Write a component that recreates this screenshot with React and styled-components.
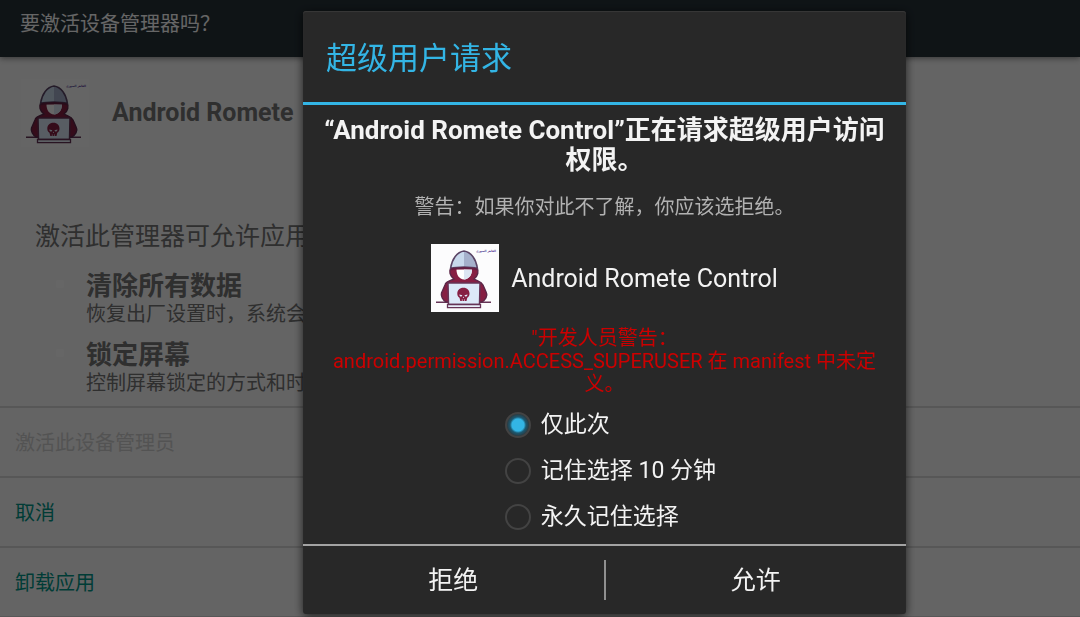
import React, { useState } from "react";
import styled, { createGlobalStyle } from "styled-components";

const GlobalStyle = createGlobalStyle`
  * { box-sizing: border-box; }
  body {
    margin: 0;
    background: #fafafa;
    font-family: Roboto, "Noto Sans CJK SC", sans-serif;
  }
  h1, h2, h3, p, ul, fieldset { margin: 0; padding: 0; border: 0; }
  button { font-family: inherit; background: none; border: 0; cursor: pointer; }
`;

const Page = styled.div`
  display: flex;
  flex-direction: column;
  height: 100vh;
  overflow: hidden;
  white-space: nowrap;
  color: #757575;
`;

const AppBar = styled.header`
  flex: none;
  height: 57px;
  padding: 12px 20px;
  background: #263238;
  color: #ffffff;
  box-shadow: 0 1px 6px rgba(0, 0, 0, 0.5);
`;

const AppBarTitle = styled.h1`
  font-size: 20px;
  line-height: 24px;
  font-weight: 400;
`;

const AdminInfo = styled.main`
  flex: none;
  padding: 22px 0 10px;
`;

const AdminHeader = styled.div`
  display: flex;
  align-items: center;
  gap: 23px;
  padding-left: 21px;
  margin-bottom: 75px;
`;

const AdminName = styled.h2`
  font-size: 25px;
  line-height: 30px;
  font-weight: 700;
`;

const Description = styled.p`
  padding-left: 35px;
  margin-bottom: 19px;
  font-size: 25px;
  line-height: 30px;
`;

const PolicyList = styled.ul`
  display: flex;
  flex-direction: column;
  gap: 13px;
  padding-left: 56px;
  list-style: none;
`;

const Policy = styled.li`
  display: grid;
  grid-template-columns: 8px 1fr;
  column-gap: 22px;

  &::before {
    content: "";
    height: 8px;
    margin-top: 9px;
    border-radius: 2px;
    background: #ffffff;
  }
`;

const PolicyName = styled.h3`
  font-size: 26px;
  line-height: 30px;
  font-weight: 700;
`;

const PolicyText = styled.p`
  font-size: 20px;
  line-height: 26px;
`;

const Actions = styled.nav`
  display: flex;
  flex-direction: column;
  border-bottom: 2px solid #dadada;
`;

const ActionButton = styled.button`
  height: 70px;
  padding: 2px 15px 0;
  border-top: 2px solid #dadada;
  font-size: 20px;
  line-height: 24px;
  text-align: left;
  color: #009688;

  &:disabled { color: #d0d0d0; }
`;

const Scrim = styled.div`
  position: fixed;
  inset: 0;
  display: flex;
  align-items: flex-start;
  padding: 11px 174px 3px 303px;
  background: rgba(0, 0, 0, 0.6);
`;

const Dialog = styled.form`
  flex: 1;
  min-width: 0;
  border-radius: 3px;
  background: #282828;
  color: #f3f3f3;
  box-shadow: 0 2px 10px rgba(0, 0, 0, 0.7), inset 0 1px 1px #383838;
`;

const DialogTitle = styled.h2`
  padding: 29px 23px 25px;
  border-bottom: 3px solid #33b5e5;
  font-size: 31px;
  line-height: 37px;
  font-weight: 400;
  color: #33b5e5;
`;

const DialogBody = styled.div`
  padding: 10px 20px 4px;
  text-align: center;
`;

const Question = styled.p`
  font-size: 26px;
  line-height: 30px;
  font-weight: 700;
`;

const Caution = styled.p`
  margin-top: 20px;
  font-size: 20px;
  line-height: 24px;
  color: #b2b2b2;
`;

const AppRow = styled.div`
  display: flex;
  align-items: center;
  justify-content: center;
  gap: 12px;
  margin: 25px 0 15px;
`;

const AppName = styled.span`
  padding-top: 2px;
  font-size: 25px;
  line-height: 30px;
`;

const DeveloperWarning = styled.p`
  font-size: 20px;
  line-height: 23px;
  color: #cc0000;
`;

const Options = styled.fieldset`
  display: flex;
  flex-direction: column;
  width: fit-content;
  margin: 6px auto 0;
  && { padding-left: 12px; }
`;

const Option = styled.label`
  display: flex;
  align-items: center;
  gap: 10px;
  height: 46px;
  font-size: 23px;
  line-height: 28px;
  cursor: pointer;
`;

const Radio = styled.input`
  appearance: none;
  width: 26px;
  height: 26px;
  margin: 0;
  border: 2px solid #434343;
  border-radius: 50%;

  &:checked {
    background: radial-gradient(circle, #33b5e5 6px, #1b5870 8px, #2b3b42 11px);
  }
`;

const DialogFooter = styled.div`
  display: flex;
  align-items: center;
  height: 70px;
  border-top: 2px solid #a3a3a3;
`;

const FooterButton = styled.button`
  flex: 1;
  height: 68px;
  padding-top: 3px;
  font-size: 25px;
  line-height: 30px;
  color: #f3f3f3;
`;

const Divider = styled.span`
  width: 2px;
  height: 40px;
  background: #909090;
`;

const Picture = styled.svg`
  flex: none;
  display: block;
  width: 68px;
  height: 68px;
`;

function HackerIcon() {
  return (
    <Picture viewBox="0 0 68 68" aria-hidden="true">
      <rect width="68" height="68" fill="#fcfcfd" />
      <path d="M5 58.3H60" stroke="#653456" strokeWidth="1.4" />
      <path
        d="M20 24C17.5 27 19 32 23 35C18 37.500 15 37 14 41L10.500 49C9.500 52 12 56 15 58H51C54 56 57 52 55.500 49L52 41C50 37 47 37.500 43 35C47 32 48 27 46 24Z"
        fill="#861f43"
        stroke="#5b2748"
        strokeWidth="1.4"
      />
      <path d="M25.500 25.500H41C41 31 38 35 33 35.500C28 35 25.500 31 25.500 25.500Z" fill="#fff" />
      <path d="M33 25.500H41C41 31 38 35 33 35.500Z" fill="#dce5f2" />
      <path
        d="M33 7C26 8 21 15 19.500 24.500C26 22.500 40 22.500 46.500 24.500C45 15 40 8 33 7Z"
        fill="#c8d9ec"
      />
      <path d="M33 7C40 8 45 15 46.500 24.500C42 23 37 23 33 23Z" fill="#a5b0cb" />
      <path
        d="M33 7C26 8 21 15 19.500 24.500C26 22.500 40 22.500 46.500 24.500C45 15 40 8 33 7Z"
        fill="none"
        stroke="#5a4465"
        strokeWidth="1.5"
        strokeLinejoin="round"
      />
      <path d="M20 25.500C26 23.500 40 23.500 46 25.500" fill="none" stroke="#641f43" strokeWidth="2" />
      <path d="M17 39H49L48.500 60.500H17.500Z" fill="#dce9f8" stroke="#653456" strokeWidth="1.5" />
      <path d="M16.500 60.500H49.500V63.700H16.500Z" fill="#e8effa" stroke="#653456" strokeWidth="1.3" />
      <path
        d="M32.400 43.800C28.500 43.800 26.300 46.300 26.300 49.500C26.300 51.500 27 53 28.500 53.800L29.300 57H35.500L36.300 53.800C37.800 53 38.500 51.500 38.500 49.500C38.500 46.300 36.300 43.800 32.400 43.800Z"
        fill="#861f43"
      />
      <path
        d="M28.300 50.400L31.300 51.200C31 53.200 28.500 53 28.300 50.400ZM36.500 50.400L33.500 51.200C33.800 53.200 36.300 53 36.500 50.400ZM32.400 52.500L33 54H31.800Z"
        fill="#e4eafa"
      />
      <path d="M31.300 55.300V57M33.500 55.300V57" stroke="#e4eafa" strokeWidth="0.600" />
      <text
        x="55"
        y="8"
        textAnchor="middle"
        fontFamily="DejaVu Sans Condensed, DejaVu Sans, sans-serif"
        fontWeight="700"
        fontSize="3"
        fill="#49318f"
      >
        القاهر السوري
      </text>
    </Picture>
  );
}

const policies = [
  { name: "清除所有数据", text: "恢复出厂设置时，系统会" },
  { name: "锁定屏幕", text: "控制屏幕锁定的方式和时" },
];

const choices = ["仅此次", "记住选择 10 分钟", "永久记住选择"];

export default function App() {
  const [choice, setChoice] = useState(0);

  return (
    <>
      <GlobalStyle />
      <Page lang="zh-CN">
        <AppBar>
          <AppBarTitle>要激活设备管理器吗？</AppBarTitle>
        </AppBar>
        <AdminInfo>
          <AdminHeader>
            <HackerIcon />
            <AdminName>Android Romete</AdminName>
          </AdminHeader>
          <Description>激活此管理器可允许应用</Description>
          <PolicyList>
            {policies.map((policy) => (
              <Policy key={policy.name}>
                <div>
                  <PolicyName>{policy.name}</PolicyName>
                  <PolicyText>{policy.text}</PolicyText>
                </div>
              </Policy>
            ))}
          </PolicyList>
        </AdminInfo>
        <Actions>
          <ActionButton type="button" disabled>激活此设备管理员</ActionButton>
          <ActionButton type="button">取消</ActionButton>
          <ActionButton type="button">卸载应用</ActionButton>
        </Actions>
      </Page>
      <Scrim lang="zh-CN">
        <Dialog role="dialog" aria-labelledby="dialog-title" onSubmit={(e) => e.preventDefault()}>
          <DialogTitle id="dialog-title">超级用户请求</DialogTitle>
          <DialogBody>
            <Question>“Android Romete Control”正在请求超级用户访问权限。</Question>
            <Caution>警告：如果你对此不了解，你应该选拒绝。</Caution>
            <AppRow>
              <HackerIcon />
              <AppName>Android Romete Control</AppName>
            </AppRow>
            <DeveloperWarning>
              "开发人员警告：
              <br />
              android.permission.ACCESS_SUPERUSER 在 manifest 中未定义。
            </DeveloperWarning>
            <Options>
              {choices.map((label, index) => (
                <Option key={label}>
                  <Radio
                    type="radio"
                    name="remember"
                    checked={choice === index}
                    onChange={() => setChoice(index)}
                  />
                  {label}
                </Option>
              ))}
            </Options>
          </DialogBody>
          <DialogFooter>
            <FooterButton type="button">拒绝</FooterButton>
            <Divider />
            <FooterButton type="submit">允许</FooterButton>
          </DialogFooter>
        </Dialog>
      </Scrim>
    </>
  );
}
